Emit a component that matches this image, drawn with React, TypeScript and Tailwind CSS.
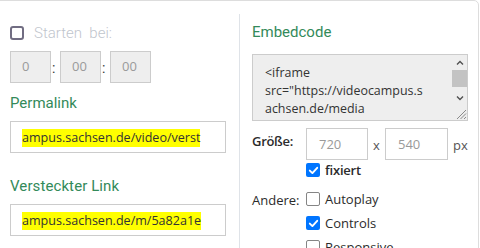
import React from "react";

function Box({ checked }: { checked?: boolean }) {
  return checked ? (
    <span className="w-[14px] h-[14px] rounded-[2px] bg-[#0075ff] flex items-center justify-center shrink-0">
      <svg width="11" height="11" viewBox="0 0 11 11">
        <path d="M1.8 5.6 L4.4 8.1 L9.2 2.8" stroke="white" strokeWidth="1.9" fill="none" strokeLinecap="round" strokeLinejoin="round" />
      </svg>
    </span>
  ) : (
    <span className="w-[14px] h-[14px] rounded-[2px] border-[1.5px] border-[#858585] bg-white shrink-0" />
  );
}

function TimeBox({ v }: { v: string }) {
  return (
    <div className="w-[41px] h-[32px] bg-[#eeeeee] border border-[#cccccc] pl-[11px] flex items-center text-[13px] text-[#9a9a9a] font-['Open_Sans',sans-serif]">
      {v}
    </div>
  );
}

function LinkBox({ text }: { text: string }) {
  return (
    <div className="w-[216px] h-[32px] border border-[#cccccc] pl-[11px] pr-[11px] flex items-center overflow-hidden">
      <div className="overflow-hidden whitespace-nowrap w-full">
        <span className="bg-[#ffff00] text-[#333333] text-[12.55px] leading-[17px] py-[0.5px] inline-block font-['Open_Sans',sans-serif]">{text}</span>
      </div>
    </div>
  );
}

export default function App() {
  return (
    <div className="w-[480px] h-[248px] overflow-hidden bg-white">
      <div className="ml-[-10px] w-[489px] h-[300px] border border-[#dddddd] rounded-[5px] flex">
        {/* left column */}
        <div className="w-[248px] pl-[19px] flex flex-col font-['Roboto',sans-serif]">
          <div className="mt-[25px] h-[14px] flex items-center gap-[10px]">
            <span className="w-[14px] h-[14px] rounded-[3px] border-2 border-[#716d82] bg-white shrink-0" />
            <span className="text-[15px] leading-[14px] font-light text-[#bfc5cd]">
              Starten&nbsp; bei:
            </span>
          </div>
          <div className="mt-[11px] flex items-center">
            <TimeBox v="0" />
            <span className="w-[9px] pl-[1px] text-[14px] text-[#333333] leading-none pt-[2px]">:</span>
            <TimeBox v="00" />
            <span className="w-[9px] pl-[1px] text-[14px] text-[#333333] leading-none pt-[2px]">:</span>
            <TimeBox v="00" />
          </div>
          <div className="mt-[10px] text-[15px] leading-[20px] text-[#338a5a]">Permalink</div>
          <div className="mt-[8px]">
            <LinkBox text="ampus.sachsen.de/video/verst" />
          </div>
          <div className="mt-[23px] text-[15px] leading-[20px] text-[#338a5a] tracking-[0.1px]">
            Versteckter&nbsp;Link
          </div>
          <div className="mt-[8px]">
            <LinkBox text="ampus.sachsen.de/m/5a82a1e" />
          </div>
        </div>

        {/* divider */}
        <div className="w-px bg-[#dfe3e8] mt-[13px]" />

        {/* right column */}
        <div className="flex-1 pl-[12px] flex flex-col font-['Open_Sans',sans-serif] text-[13px] text-[#2b2b2b]">
          <div className="mt-[21px] text-[15px] leading-[20px] text-[#338a5a] font-['Roboto',sans-serif]">Embedcode</div>
          <div className="mt-[12px] w-[216px] h-[67px] bg-[#eeeeee] border border-[#cccccc] flex overflow-hidden">
            <div className="flex-1 pl-[12px] pt-[9px] text-[12.45px] leading-[18px] text-[#333333] whitespace-nowrap overflow-hidden">
              <div>&lt;iframe</div>
              <div>src="https://videocampus.s</div>
              <div>achsen.de/media</div>
            </div>
            <div className="w-[15px] flex flex-col">
              <div className="h-[15px] flex items-center justify-center">
                <svg width="8" height="6" viewBox="0 0 8 6">
                  <path d="M1 4.5 L4 1.5 L7 4.5" stroke="#505050" strokeWidth="1.4" fill="none" />
                </svg>
              </div>
              <div className="h-[20px]">
                <div className="h-[17px] bg-[#c3c3c3]" />
              </div>
              <div className="h-[15px] flex items-center justify-center">
                <svg width="8" height="6" viewBox="0 0 8 6">
                  <path d="M1 1.5 L4 4.5 L7 1.5" stroke="#505050" strokeWidth="1.4" fill="none" />
                </svg>
              </div>
              <div className="h-[15px] flex items-end justify-end">
                <svg width="13" height="13" viewBox="0 0 13 13">
                  <path d="M12 3 L3 12 M12 6.5 L6.5 12 M12 10 L10 12" stroke="#8a8a8a" strokeWidth="1" fill="none" />
                </svg>
              </div>
            </div>
          </div>

          <div className="flex mt-[7px]">
            <div className="w-[54px] pt-[4px] leading-[18px] font-semibold tracking-[-0.3px]">Größe:</div>
            <div className="flex flex-col">
              <div className="flex items-center h-[32px]">
                <div className="w-[62px] h-[32px] border border-[#cccccc] pl-[12px] flex items-center text-[#9a9a9a] leading-[18px]">720</div>
                <span className="w-[17px] text-center text-[#555555] leading-[18px] pt-[2px]">x</span>
                <div className="w-[63px] h-[32px] border border-[#cccccc] pl-[12px] flex items-center text-[#9a9a9a] leading-[18px]">540</div>
                <span className="ml-[5px] text-[#555555] leading-[18px] pt-[2px]">px</span>
              </div>
              <div className="flex items-center gap-[5px] mt-[3px] h-[14px]">
                <Box checked />
                <span className="leading-[14px] font-semibold tracking-[-0.2px]">fixiert</span>
              </div>
            </div>
          </div>

          <div className="flex mt-[15px]">
            <div className="w-[54px] leading-[14px] pt-[1px] font-medium">Andere:</div>
            <div className="flex flex-col gap-[10px]">
              <div className="flex items-center gap-[5px] h-[14px]">
                <Box />
                <span className="leading-[14px] font-medium">Autoplay</span>
              </div>
              <div className="flex items-center gap-[5px] h-[14px]">
                <Box checked />
                <span className="leading-[14px] font-medium">Controls</span>
              </div>
              <div className="flex items-center gap-[5px] h-[14px]">
                <Box />
                <span className="leading-[14px] font-medium">Responsive</span>
              </div>
            </div>
          </div>
        </div>
      </div>
    </div>
  );
}
